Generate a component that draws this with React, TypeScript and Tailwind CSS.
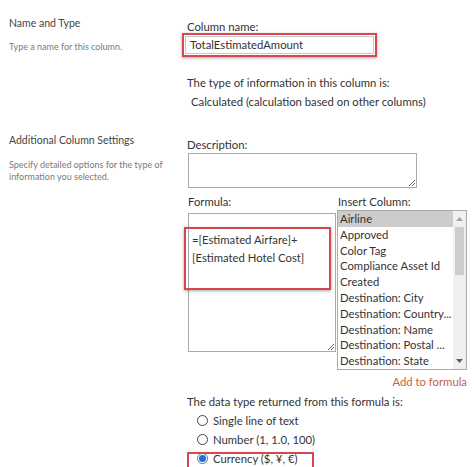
import { useState } from "react";

const columns = [
  "Airline",
  "Approved",
  "Color Tag",
  "Compliance Asset Id",
  "Created",
  "Destination: City",
  "Destination: Country...",
  "Destination: Name",
  "Destination: Postal ...",
  "Destination: State",
];

const dataTypes = ["Single line of text", "Number (1, 1.0, 100)", "Currency ($, ¥, €)"];

function Radio({ checked }: { checked: boolean }) {
  return checked ? (
    <span className="flex h-[11px] w-[11px] items-center justify-center rounded-full border border-[#2b7fd4] bg-white">
      <span className="h-[7px] w-[7px] rounded-full bg-[#1a73d1]" />
    </span>
  ) : (
    <span className="h-[11px] w-[11px] rounded-full border border-[#444] bg-white" />
  );
}

export default function App() {
  const [selected] = useState(2);

  return (
    <div className="relative h-[467px] w-[474px] overflow-hidden bg-white text-[#333] font-['Lato',sans-serif]">
      <div className="flex">
        {/* Left: section titles */}
        <div className="w-[187px] shrink-0 pl-[9px] pt-[15px]">
          <div className="text-[10.5px] leading-[16px] text-[#444]">Name and Type</div>
          <div className="mt-[9px] text-[9px] leading-[14px] text-[#7a7a7a]">Type a name for this column.</div>
          <div className="mt-[78px] text-[10.5px] leading-[16px] text-[#444]">Additional Column Settings</div>
          <div className="mt-[11px] text-[9px] leading-[12px] text-[#7a7a7a]">
            Specify detailed options for the type of
            <br />
            information you selected.
          </div>
        </div>

        {/* Right: fields */}
        <div className="flex-1 text-[11.3px]">
          <div className="mt-[20px] leading-[14px]">Column name:</div>
          <div className="relative ml-[-5px] mt-[-1px] h-[24px] w-[195px] border-2 border-[#d6474f] p-[1px] shadow-[0_1px_3px_rgba(0,0,0,0.35)]">
            <div className="flex h-full items-center border border-[#c8c8c8] pl-[4px] leading-none">TotalEstimatedAmount</div>
          </div>

          <div className="mt-[18px] leading-[16px]">The type of information in this column is:</div>
          <div className="ml-[4px] mt-[3px] leading-[16px]">Calculated (calculation based on other columns)</div>

          <div className="mt-[27px] leading-[16px]">Description:</div>
          <div className="relative ml-[1px] h-[35px] w-[229px] border border-[#ababab]">
            <Grip />
          </div>

          <div className="mt-[6px] flex leading-[16px]">
            <div className="w-[151px] pl-[1px]">Formula:</div>
            <div>Insert Column:</div>
          </div>

          <div className="flex">
            <div className="relative ml-[1px] mt-[3px] h-[139px] w-[148px] border border-[#ababab]">
              <Grip />
            </div>
            <div className="ml-[1px] flex h-[160px] w-[130px] border border-[#ababab]">
              <div className="flex-1 overflow-hidden">
                {columns.map((c, i) => (
                  <div
                    key={c}
                    className={`h-[15.8px] whitespace-nowrap pl-[2px] leading-[15.8px] ${i === 0 ? "bg-[#cccccc]" : ""}`}
                  >
                    {c}
                  </div>
                ))}
              </div>
              <div className="flex w-[13px] flex-col bg-[#f0f0f0]">
                <div className="flex h-[16px] items-center justify-center">
                  <svg width="7" height="4" viewBox="0 0 7 4"><path d="M0 4 L3.5 0 L7 4 Z" fill="#a3a3a3" /></svg>
                </div>
                <div className="mx-[2px] h-[48px] bg-[#cdcdcd]" />
                <div className="flex-1" />
                <div className="flex h-[16px] items-center justify-center">
                  <svg width="7" height="4" viewBox="0 0 7 4"><path d="M0 0 L3.5 4 L7 0 Z" fill="#606060" /></svg>
                </div>
              </div>
            </div>
          </div>

          <div className="mt-[4px] w-[280px] text-right leading-[16px] text-[#c8603f]">Add to formula</div>
          <div className="mt-[4px] leading-[16px]">The data type returned from this formula is:</div>
          <div className="mt-[1px]">
            {dataTypes.map((t, i) => (
              <div key={t} className="flex h-[19px] items-center gap-[5px] pl-[10px]">
                <Radio checked={i === selected} />
                <span className="leading-none">{t}</span>
              </div>
            ))}
          </div>
        </div>
      </div>

      {/* Annotation highlights */}
      <div className="pointer-events-none absolute left-[184px] top-[227px] h-[63px] w-[147px] border-2 border-[#d6474f] shadow-[0_1px_3px_rgba(0,0,0,0.35)]" />
      <div className="pointer-events-none absolute left-[187px] top-[452px] h-[20px] w-[127px] border-2 border-[#d6474f]" />
      <div className="pointer-events-none absolute left-[192px] top-[231px] text-[11.3px] leading-[18px] text-[#333]">
        =[Estimated Airfare]+
        <br />
        [Estimated Hotel Cost]
      </div>
    </div>
  );
}

function Grip() {
  return (
    <svg className="absolute bottom-[1px] right-[1px]" width="7" height="7" viewBox="0 0 7 7">
      <path d="M7 1 L1 7 M7 4 L4 7" stroke="#666" strokeWidth="1" />
    </svg>
  );
}
